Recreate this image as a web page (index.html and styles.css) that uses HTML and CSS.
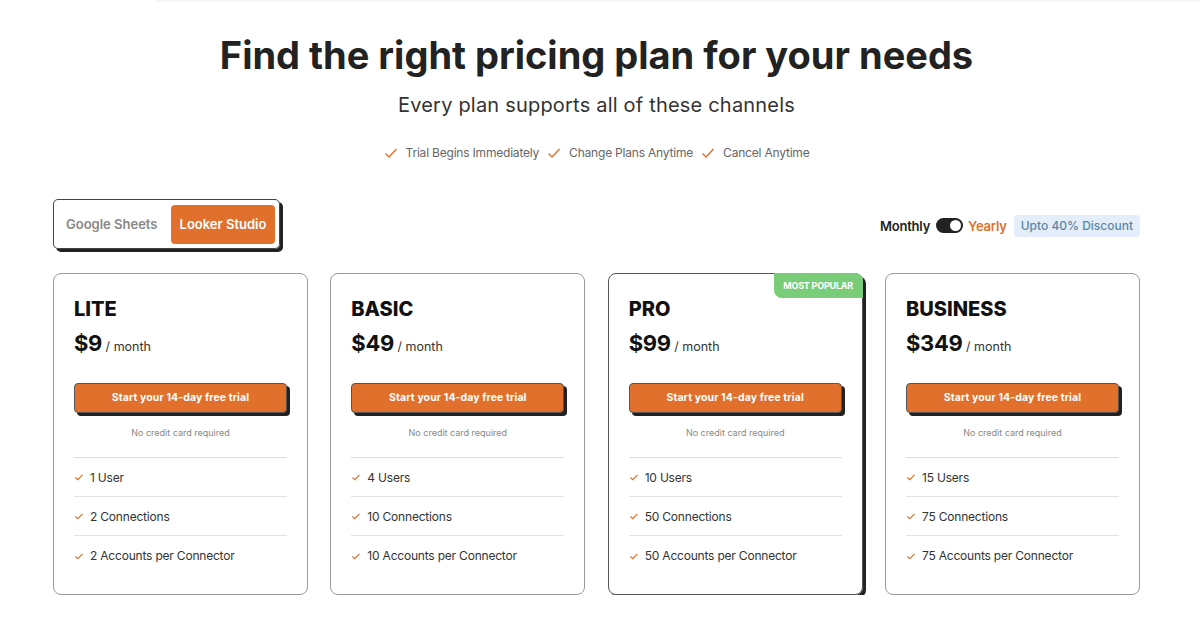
FILE: index.html
```html
<!DOCTYPE html>
<html lang="en">

<head>
    <meta charset="UTF-8">
    <title>Pricing</title>
    <link rel="stylesheet" href="styles.css">
</head>

<body>
    <div class="topline"></div>
    <div class="page">
        <h1 class="title">Find the right pricing plan for your needs</h1>
        <p class="subtitle">Every plan supports all of these channels</p>
        <ul class="perks">
            <li><svg viewBox="0 0 14 14"><path d="M1.5 7.5l3.5 3.5L12.5 3"/></svg>Trial Begins Immediately</li>
            <li><svg viewBox="0 0 14 14"><path d="M1.5 7.5l3.5 3.5L12.5 3"/></svg>Change Plans Anytime</li>
            <li><svg viewBox="0 0 14 14"><path d="M1.5 7.5l3.5 3.5L12.5 3"/></svg>Cancel Anytime</li>
        </ul>

        <div class="toolbar">
            <div class="tabs">
                <span class="tab">Google Sheets</span>
                <span class="tab active">Looker Studio</span>
            </div>
            <div class="billing">
                <span class="monthly">Monthly</span>
                <span class="switch"><span class="knob"></span></span>
                <span class="yearly">Yearly</span>
                <span class="discount">Upto 40% Discount</span>
            </div>
        </div>

        <div class="cards">
            <div class="card">
                <h2>LITE</h2>
                <div class="price"><b>$9</b> / month</div>
                <a class="trial">Start your 14-day free trial</a>
                <p class="note">No credit card required</p>
                <ul class="features">
                    <li><svg viewBox="0 0 10 10"><path d="M1.5 5.5l2.3 2.2L8.5 2.8"/></svg>1 User</li>
                    <li><svg viewBox="0 0 10 10"><path d="M1.5 5.5l2.3 2.2L8.5 2.8"/></svg>2 Connections</li>
                    <li><svg viewBox="0 0 10 10"><path d="M1.5 5.5l2.3 2.2L8.5 2.8"/></svg>2 Accounts per Connector</li>
                </ul>
            </div>
            <div class="card">
                <h2>BASIC</h2>
                <div class="price"><b>$49</b> / month</div>
                <a class="trial">Start your 14-day free trial</a>
                <p class="note">No credit card required</p>
                <ul class="features">
                    <li><svg viewBox="0 0 10 10"><path d="M1.5 5.5l2.3 2.2L8.5 2.8"/></svg>4 Users</li>
                    <li><svg viewBox="0 0 10 10"><path d="M1.5 5.5l2.3 2.2L8.5 2.8"/></svg>10 Connections</li>
                    <li><svg viewBox="0 0 10 10"><path d="M1.5 5.5l2.3 2.2L8.5 2.8"/></svg>10 Accounts per Connector</li>
                </ul>
            </div>
            <div class="card popular">
                <span class="badge">MOST POPULAR</span>
                <h2>PRO</h2>
                <div class="price"><b>$99</b> / month</div>
                <a class="trial">Start your 14-day free trial</a>
                <p class="note">No credit card required</p>
                <ul class="features">
                    <li><svg viewBox="0 0 10 10"><path d="M1.5 5.5l2.3 2.2L8.5 2.8"/></svg>10 Users</li>
                    <li><svg viewBox="0 0 10 10"><path d="M1.5 5.5l2.3 2.2L8.5 2.8"/></svg>50 Connections</li>
                    <li><svg viewBox="0 0 10 10"><path d="M1.5 5.5l2.3 2.2L8.5 2.8"/></svg>50 Accounts per Connector</li>
                </ul>
            </div>
            <div class="card">
                <h2>BUSINESS</h2>
                <div class="price"><b>$349</b> / month</div>
                <a class="trial">Start your 14-day free trial</a>
                <p class="note">No credit card required</p>
                <ul class="features">
                    <li><svg viewBox="0 0 10 10"><path d="M1.5 5.5l2.3 2.2L8.5 2.8"/></svg>15 Users</li>
                    <li><svg viewBox="0 0 10 10"><path d="M1.5 5.5l2.3 2.2L8.5 2.8"/></svg>75 Connections</li>
                    <li><svg viewBox="0 0 10 10"><path d="M1.5 5.5l2.3 2.2L8.5 2.8"/></svg>75 Accounts per Connector</li>
                </ul>
            </div>
        </div>
    </div>
</body>

</html>
```

FILE: styles.css
```css
* {
    margin: 0;
    padding: 0;
    box-sizing: border-box;
}

body {
    font-family: "Inter", "Liberation Sans", sans-serif;
    color: #222;
    background: #fff;
}

.topline {
    height: 2px;
    margin-left: 155px;
    background: #f7f7f7;
}

.page {
    width: 1087px;
    margin-left: 53px;
    padding-top: 30px;
}

.title {
    font-size: 38px;
    line-height: 46px;
    font-weight: 700;
    text-align: center;
    color: #222;
}

.subtitle {
    margin-top: 13px;
    font-size: 20px;
    line-height: 28px;
    text-align: center;
    color: #333;
    letter-spacing: 0.2px;
}

.perks {
    list-style: none;
    display: flex;
    justify-content: center;
    gap: 8px;
    margin-top: 25px;
    font-size: 12px;
    line-height: 18px;
    color: #666;
    letter-spacing: -0.2px;
}

.perks li {
    display: flex;
    align-items: center;
    gap: 8px;
}

.perks svg {
    width: 14px;
    height: 14px;
    fill: none;
    stroke: #e0702c;
    stroke-width: 1.4;
}

.toolbar {
    display: flex;
    justify-content: space-between;
    align-items: center;
    margin-top: 37px;
}

.tabs {
    display: flex;
    align-items: center;
    width: 227px;
    height: 50px;
    padding: 5px 4px 5px 12px;
    border: 1px solid #444;
    border-radius: 5px;
    box-shadow: 3px 3px 0 #222;
    font-size: 13px;
    font-weight: 600;
}

.tab {
    color: #888;
}

.tab.active {
    margin-left: auto;
    width: 104px;
    height: 39px;
    line-height: 39px;
    text-align: center;
    background: #e0702c;
    color: #fff;
    border-radius: 4px;
}

.billing {
    display: flex;
    align-items: center;
    margin-top: 3px;
    font-size: 13px;
    font-weight: 600;
}

.monthly {
    color: #222;
    letter-spacing: -0.2px;
}

.switch {
    display: flex;
    align-items: center;
    justify-content: flex-end;
    width: 27px;
    height: 15px;
    margin: 0 5px 0 6px;
    padding: 2px;
    border-radius: 8px;
    background: #222;
}

.knob {
    width: 11px;
    height: 11px;
    border-radius: 50%;
    background: #fff;
}

.yearly {
    color: #e0702c;
    letter-spacing: -0.2px;
}

.discount {
    margin-left: 7px;
    padding: 0 7px;
    height: 22px;
    line-height: 22px;
    border-radius: 4px;
    background: #e4eefb;
    color: #5b86a4;
    font-weight: 500;
    font-size: 12px;
}

.cards {
    display: grid;
    grid-template-columns: repeat(4, 255px);
    justify-content: space-between;
    margin-top: 24px;
}

.card {
    position: relative;
    height: 322px;
    padding: 22px 20px 20px 20px;
    border: 1px solid #999;
    border-radius: 8px;
}

.card.popular {
    border-color: #555;
    box-shadow: 3px 3px 0 #222;
}

.badge {
    position: absolute;
    top: -1px;
    right: -1px;
    width: 89px;
    height: 25px;
    line-height: 25px;
    text-align: center;
    background: #79cd78;
    color: #fff;
    font-size: 9px;
    font-weight: 700;
    letter-spacing: -0.2px;
    border-radius: 0 8px 0 8px;
}

.card h2 {
    font-size: 20px;
    line-height: 26px;
    font-weight: 800;
    color: #111;
}

.price {
    margin-top: 6px;
    font-size: 12.5px;
    color: #333;
}

.price b {
    font-size: 22px;
    line-height: 30px;
    font-weight: 700;
    color: #111;
    letter-spacing: -0.3px;
}

.trial {
    display: block;
    margin-top: 25px;
    height: 30px;
    line-height: 28px;
    border: 1px solid #555;
    border-radius: 4px;
    background: #e0702c;
    box-shadow: 3px 3px 0 #222;
    color: #fff;
    font-size: 10.5px;
    font-weight: 700;
    text-align: center;
    letter-spacing: 0.1px;
}

.note {
    margin-top: 13px;
    font-size: 9px;
    line-height: 14px;
    color: #888;
    text-align: center;
}

.features {
    list-style: none;
    margin-top: 17px;
    border-top: 1px solid #ddd;
}

.features li {
    display: flex;
    align-items: center;
    gap: 6px;
    height: 39px;
    border-bottom: 1px solid #e2e2e2;
    font-size: 12px;
    color: #333;
    letter-spacing: -0.2px;
}

.features li:last-child {
    border-bottom: none;
}

.features svg {
    width: 10px;
    height: 10px;
    fill: none;
    stroke: #e0702c;
    stroke-width: 1.2;
}
```
